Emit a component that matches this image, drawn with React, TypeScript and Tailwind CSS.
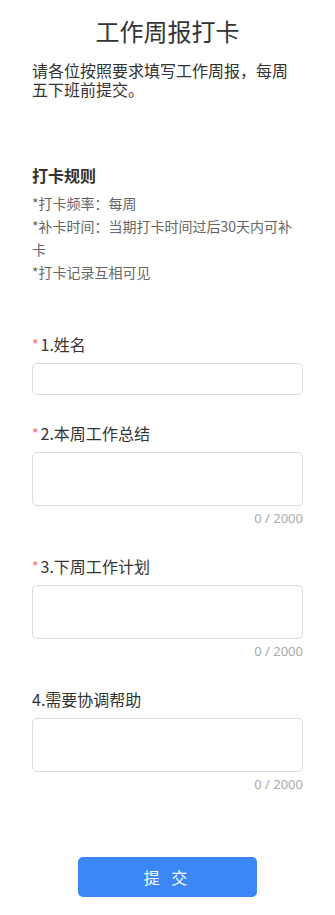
const font = "font-['Microsoft_YaHei','Noto_Sans_CJK_SC',sans-serif]";

function Label({ required, text }: { required?: boolean; text: string }) {
    return (
        <div className="flex items-center h-[22px] text-[16px] text-[#333] leading-[22px]">
            {required && <span className="text-[#f56c6c] text-[14px] mr-[2px]">*</span>}
            <span>{text}</span>
        </div>
    );
}

function TextField({ label, required }: { label: string; required?: boolean }) {
    return (
        <div>
            <Label required={required} text={label} />
            <textarea className="mt-[8px] block w-full h-[54px] rounded-[5px] border border-[#dcdcdc] resize-none outline-none" />
            <div className="text-right font-['Noto_Sans',sans-serif] text-[13px] leading-[16px] text-[#aaa] mt-[4px]">0 / 2000</div>
        </div>
    );
}

export default function App() {
    return (
        <div className={`${font} bg-white w-[335px] h-[915px] px-[32px]`}>
            {/* 标题 */}
            <h1 className="text-center text-[24px] leading-[32px] text-[#333] pt-[15px]">工作周报打卡</h1>
            <p className="mt-[14px] text-[16px] leading-[19px] text-[#333]">
                请各位按照要求填写工作周报，每周五下班前提交。
            </p>

            {/* 打卡规则 */}
            <div className="mt-[65px]">
                <div className="text-[16px] leading-[22px] font-bold text-[#333]">打卡规则</div>
                <div className="mt-[6px] text-[14px] leading-[23px] text-[#666]">
                    <div>*打卡频率：每周</div>
                    <div>*补卡时间：当期打卡时间过后30天内可补卡</div>
                    <div>*打卡记录互相可见</div>
                </div>
            </div>

            {/* 表单 */}
            <div className="mt-[49px]">
                <Label required text="1.姓名" />
                <input className="mt-[8px] block w-full h-[32px] rounded-[5px] border border-[#dcdcdc] outline-none" />
            </div>
            <div className="mt-[27px] flex flex-col gap-[29px]">
                <TextField required label="2.本周工作总结" />
                <TextField required label="3.下周工作计划" />
                <TextField label="4.需要协调帮助" />
            </div>

            <div className="mt-[65px] flex justify-center">
                <button className="w-[179px] h-[40px] rounded-[5px] bg-[#3a87f5] text-white text-[16px] tracking-[4px]">
                    提 交
                </button>
            </div>
        </div>
    );
}
